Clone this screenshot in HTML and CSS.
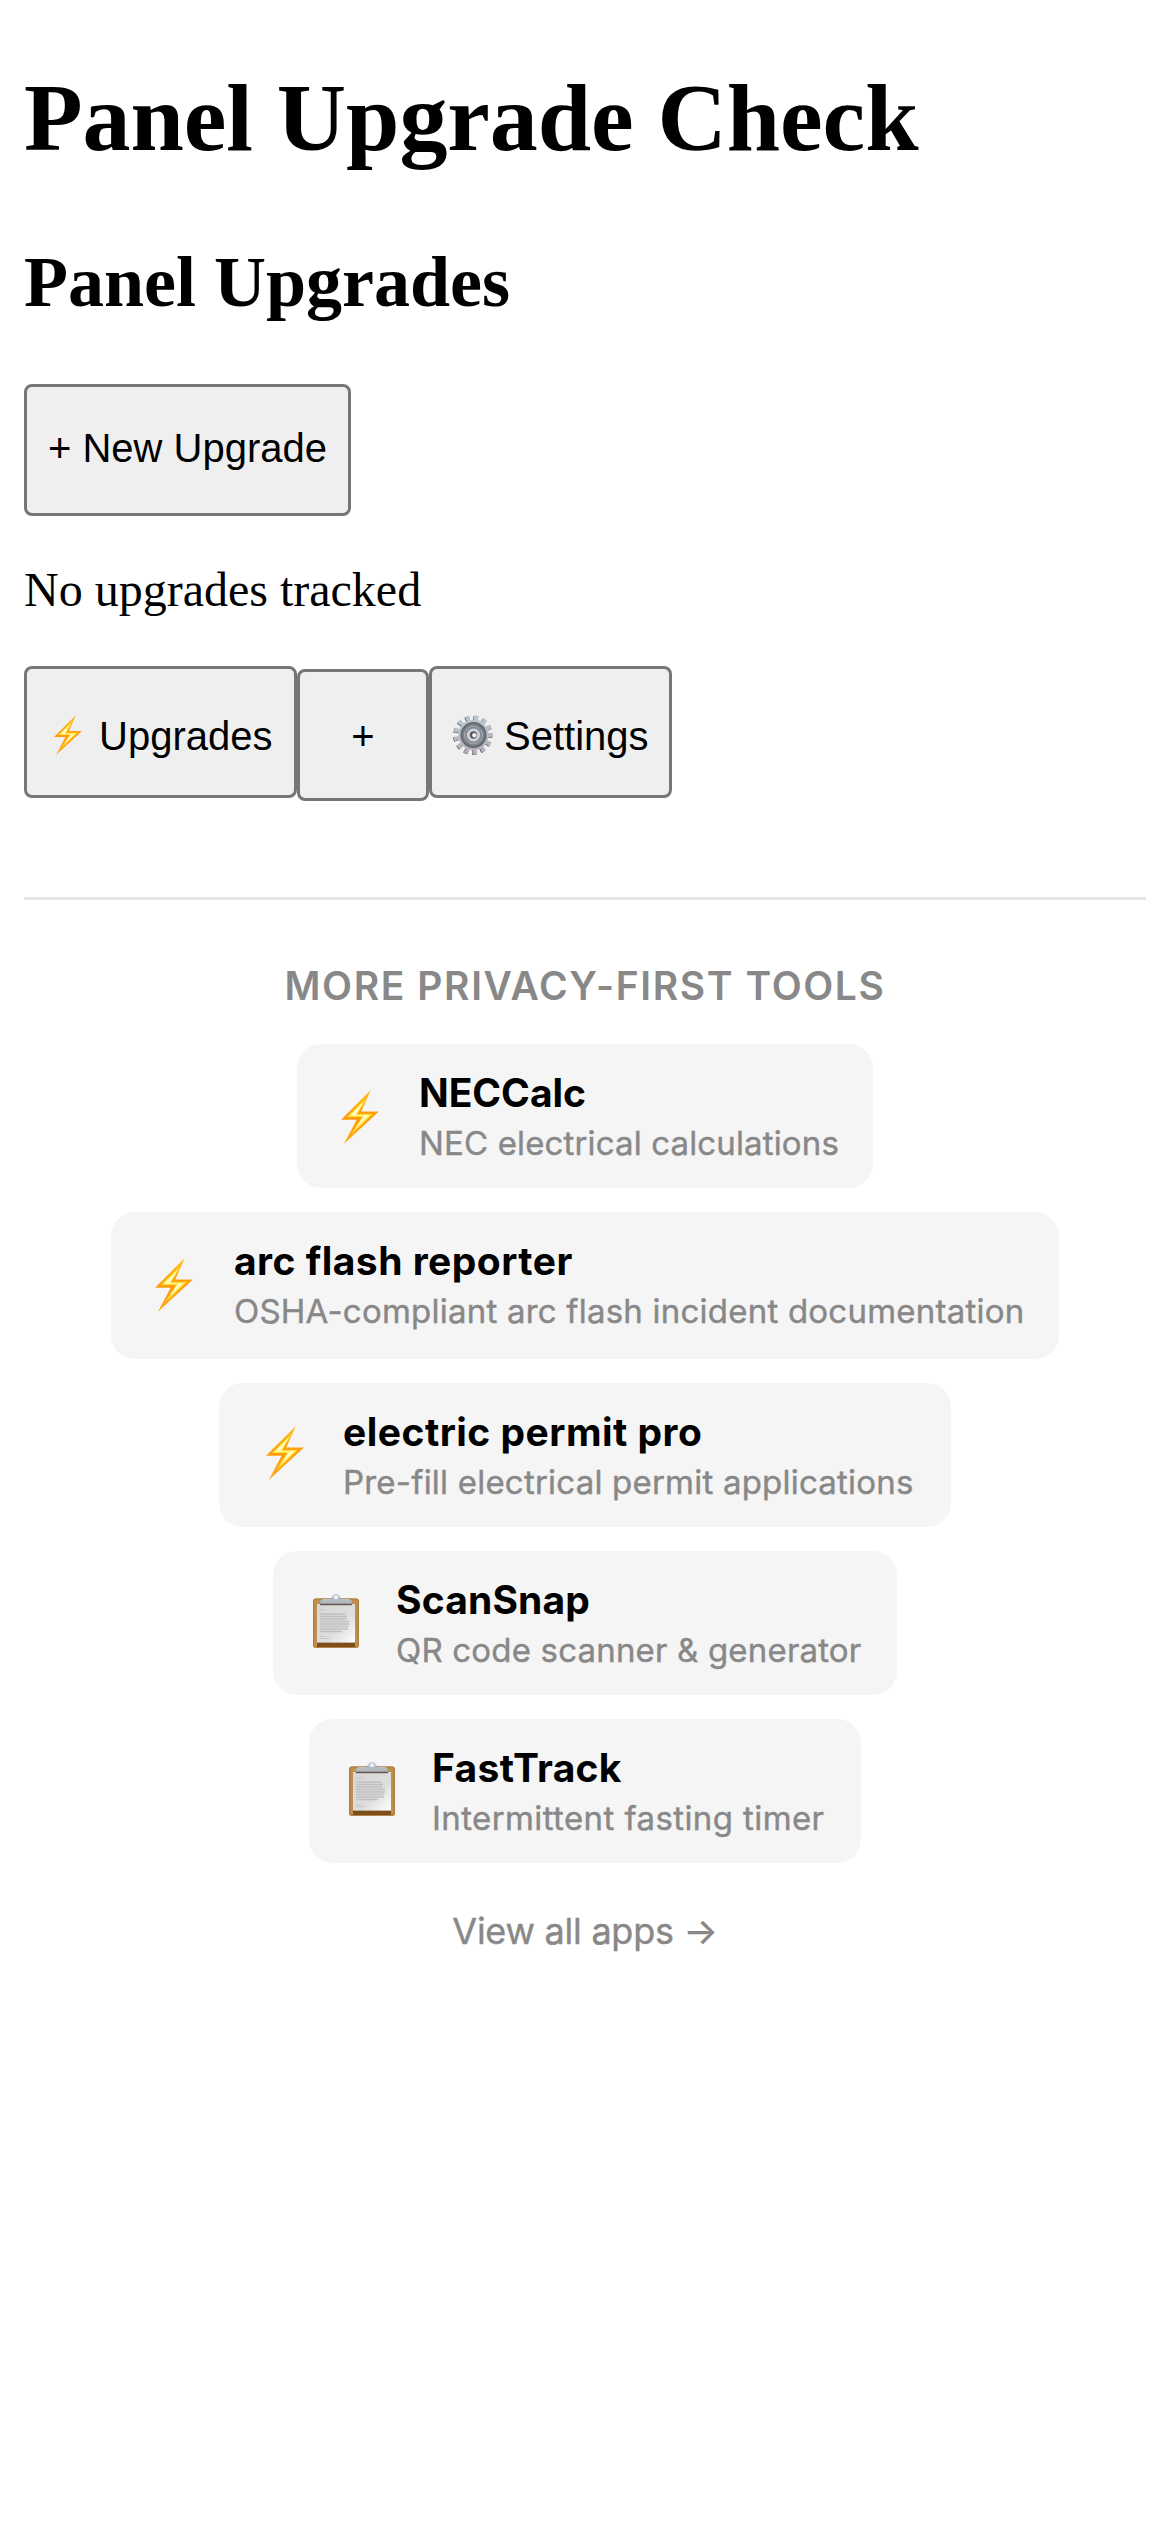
FILE: index.html
```html
<!DOCTYPE html>
<html lang="en">
<head>
<meta charset="utf-8">
<title>Panel Upgrade Check</title>
<link rel="stylesheet" href="styles.css">
</head>
<body>
<svg class="defs" aria-hidden="true">
  <defs>
    <linearGradient id="boltEdge" x1="0" y1="0" x2="0" y2="1">
      <stop offset="0" stop-color="#ffc21a"/><stop offset=".5" stop-color="#ff9a0a"/><stop offset="1" stop-color="#ffac1c"/>
    </linearGradient>
    <linearGradient id="paper" x1="0" y1="0" x2="1" y2="1">
      <stop offset="0" stop-color="#d6d6d6"/><stop offset=".6" stop-color="#dedede"/><stop offset="1" stop-color="#fff"/>
    </linearGradient>
    <linearGradient id="clip" x1="0" y1="0" x2="0" y2="1">
      <stop offset="0" stop-color="#cbd3dc"/><stop offset="1" stop-color="#a9adb3"/>
    </linearGradient>
    <linearGradient id="steel" x1="0" y1="0" x2="0" y2="1">
      <stop offset="0" stop-color="#b9c5d2"/><stop offset="1" stop-color="#b5afb8"/>
    </linearGradient>
    <symbol id="bolt" viewBox="0 0 112 160">
      <path d="M88 0 0 88H46L8 160 112 64H60Z" fill="url(#boltEdge)"/>
      <path d="M76 22 17 80H62L30 132 94 71H48Z" fill="#ffe23d"/>
      <path d="M68 34 26 76H68L42 114 84 75H43Z" fill="#fffcc4"/>
    </symbol>
    <symbol id="clipboard" viewBox="0 0 46 54">
      <rect y="4.500" width="46" height="49.500" rx="2.500" fill="#c08f4e"/>
      <rect x=".7" y="5" width="44.600" height="48" rx="2" fill="none" stroke="#a97a3c"/>
      <path d="M4 48.500H42V53H4Z" fill="#7a4f1d"/>
      <rect x="4" y="10" width="38" height="38.500" fill="url(#paper)"/>
      <path d="M7 16h6M7 42.500h5M7 44.500h9" stroke="#c2c2c2" stroke-width=".8"/>
      <path d="M7 20h26M7 22.500h27M7 25h26M7 27.500h29M7 30h29M7 32.500h28M7 35h28M7 37.500h22" stroke="#c0c0c0" stroke-width="1.300"/>
      <path d="M7 11V9q0-3.500 3.500-4H18q1-5 5-5t5 5h7.500q3.500.5 3.500 4v2Z" fill="url(#clip)"/>
      <path d="M7 10.500H39" stroke="#63504a" stroke-width="1.400"/>
      <circle cx="23" cy="3.300" r="1.800" fill="#f4f4f4"/>
      <path d="M18 4.500l1.500 1M28 4.500l-1.500 1" stroke="#86a8d2" stroke-width="1.300"/>
    </symbol>
    <symbol id="gear" viewBox="0 0 40 40">
      <circle cx="19.600" cy="20.400" r="16.800" fill="none" stroke="#55504f" stroke-width="5.500" stroke-dasharray="4 4.120" transform="rotate(-6 20 20)"/>
      <circle cx="20.300" cy="20" r="16.800" fill="none" stroke="url(#steel)" stroke-width="5.800" stroke-dasharray="4 4.120" transform="rotate(-6 20 20)"/>
      <circle cx="20.500" cy="20" r="15.200" fill="url(#steel)"/>
      <circle cx="20.500" cy="20" r="12.200" fill="#767d83" stroke="#5f676e" stroke-width="1.500"/>
      <circle cx="20.500" cy="20" r="9" fill="#868c92" stroke="#a5abb1"/>
      <circle cx="20.500" cy="20" r="6.500" fill="#cdd4dd"/>
      <circle cx="20.500" cy="20" r="3.700" fill="#5e5652"/>
      <circle cx="21.400" cy="20.300" r="2.200" fill="#eee"/>
    </symbol>
  </defs>
</svg>

<h1 class="title">Panel Upgrade Check</h1>
<h2 class="subtitle">Panel Upgrades</h2>
<button class="btn btn-new">+ New Upgrade</button>
<p class="empty">No upgrades tracked</p>

<nav class="tabs">
  <button class="btn btn-upgrades"><svg class="tab-bolt"><use href="#bolt"/></svg>Upgrades</button>
  <button class="btn btn-add">+</button>
  <button class="btn btn-settings"><svg class="tab-gear"><use href="#gear"/></svg>Settings</button>
</nav>

<footer class="more">
  <h3 class="more-title">MORE PRIVACY-FIRST TOOLS</h3>
  <div class="cards">
    <a class="card card-nec">
      <span class="icon icon-low"><svg class="bolt"><use href="#bolt"/></svg></span>
      <span class="text"><strong class="name">NECCalc</strong><span class="desc">NEC electrical calculations</span></span>
    </a>
    <a class="card card-arc">
      <span class="icon icon-low"><svg class="bolt"><use href="#bolt"/></svg></span>
      <span class="text"><strong class="name">arc flash reporter</strong><span class="desc">OSHA-compliant arc flash incident documentation</span></span>
    </a>
    <a class="card card-permit">
      <span class="icon"><svg class="bolt"><use href="#bolt"/></svg></span>
      <span class="text"><strong class="name">electric permit pro</strong><span class="desc">Pre-fill electrical permit applications</span></span>
    </a>
    <a class="card card-scan">
      <span class="icon"><svg class="clipboard"><use href="#clipboard"/></svg></span>
      <span class="text"><strong class="name">ScanSnap</strong><span class="desc">QR code scanner &amp; generator</span></span>
    </a>
    <a class="card card-fast">
      <span class="icon"><svg class="clipboard"><use href="#clipboard"/></svg></span>
      <span class="text"><strong class="name">FastTrack</strong><span class="desc">Intermittent fasting timer</span></span>
    </a>
  </div>
  <a class="all">View all apps →</a>
</footer>
</body>
</html>
```
FILE: styles.css
```css
* { box-sizing: border-box; }

body {
  margin: 0;
  padding: 62px 24px 0;
  min-height: 2532px;
  background: #fff;
  color: #000;
  font-family: "Liberation Serif", "Times New Roman", serif;
}

.defs { position: absolute; width: 0; height: 0; }

.title { margin: 0; font-size: 96px; line-height: 111px; letter-spacing: -0.08px; }
.subtitle { margin: 69px 0 61px; font-size: 72px; line-height: 81px; }
.empty { margin: 47px 0 49px; font-size: 48px; line-height: 54px; }

.btn {
  display: flex;
  align-items: center;
  height: 132px;
  margin: 0;
  padding: 0 21px;
  border: 3px solid #767676;
  border-radius: 8px;
  background: #efefef;
  color: #000;
  font: 40px "Liberation Sans", Arial, sans-serif;
  white-space: nowrap;
}
.btn-new { width: 327px; padding-bottom: 4px; }

.tabs { display: flex; height: 135px; }
.btn-upgrades { width: 273px; padding: 8px 0 0 27px; }
.btn-add { width: 132px; margin-top: 3px; padding: 2px 0 0; justify-content: center; }
.btn-settings { width: 243px; padding: 8px 0 0 21px; }
.tab-bolt { width: 28px; height: 40px; margin: -2px 17px 0 0; }
.tab-gear { width: 40px; height: 40px; margin: -2px 11px 0 0; }

.more {
  margin-top: 96px;
  padding-top: 62px;
  border-top: 3px solid #e5e5e5;
  font-family: Inter, sans-serif;
  text-align: center;
}
.more-title {
  margin: 0 0 34px;
  color: #888;
  font-size: 39px;
  font-weight: 600;
  line-height: 48px;
  letter-spacing: 1.6px;
}

.cards { display: flex; flex-direction: column; align-items: center; gap: 24px; }
.card {
  display: flex;
  height: 144px;
  padding-left: 40px;
  border-radius: 24px;
  background: #f5f5f5;
  text-align: left;
  white-space: nowrap;
}
.icon { width: 83px; padding-top: 43px; }
.icon-low { padding-top: 46px; }
.bolt { display: block; width: 38px; height: 54px; margin-left: 4px; }
.clipboard { display: block; width: 46px; height: 54px; }
.text { display: flex; flex-direction: column; padding-top: 25px; }
.name { font-size: 39px; font-weight: 700; line-height: 48px; }
.desc {
  margin-top: 7px;
  color: #888;
  font-size: 33px;
  line-height: 38px;
  -webkit-text-stroke: 0.4px #888;
}

.card-nec { width: 576px; }
.card-nec .icon { width: 82px; }
.card-nec .name { letter-spacing: -0.05px; }
.card-nec .desc { letter-spacing: 0.14px; }
.card-arc { width: 948px; height: 147px; }
.card-arc .name { letter-spacing: 0.48px; }
.card-arc .desc { letter-spacing: 0.22px; }
.card-permit { width: 732px; }
.card-permit .icon { width: 84px; }
.card-permit .bolt { margin-left: 7px; }
.card-permit .name { letter-spacing: 0.48px; }
.card-permit .desc { letter-spacing: 0.21px; }
.card-scan { width: 624px; }
.card-scan .name { letter-spacing: 0.15px; }
.card-scan .desc { letter-spacing: 0.18px; }
.card-fast { width: 552px; }
.card-fast .name { letter-spacing: 0.3px; }
.card-fast .desc { letter-spacing: 0.4px; }

.all {
  display: block;
  margin-top: 47px;
  color: #888;
  font-size: 36px;
  line-height: 42px;
  letter-spacing: -0.24px;
  -webkit-text-stroke: 0.4px #888;
}
```
